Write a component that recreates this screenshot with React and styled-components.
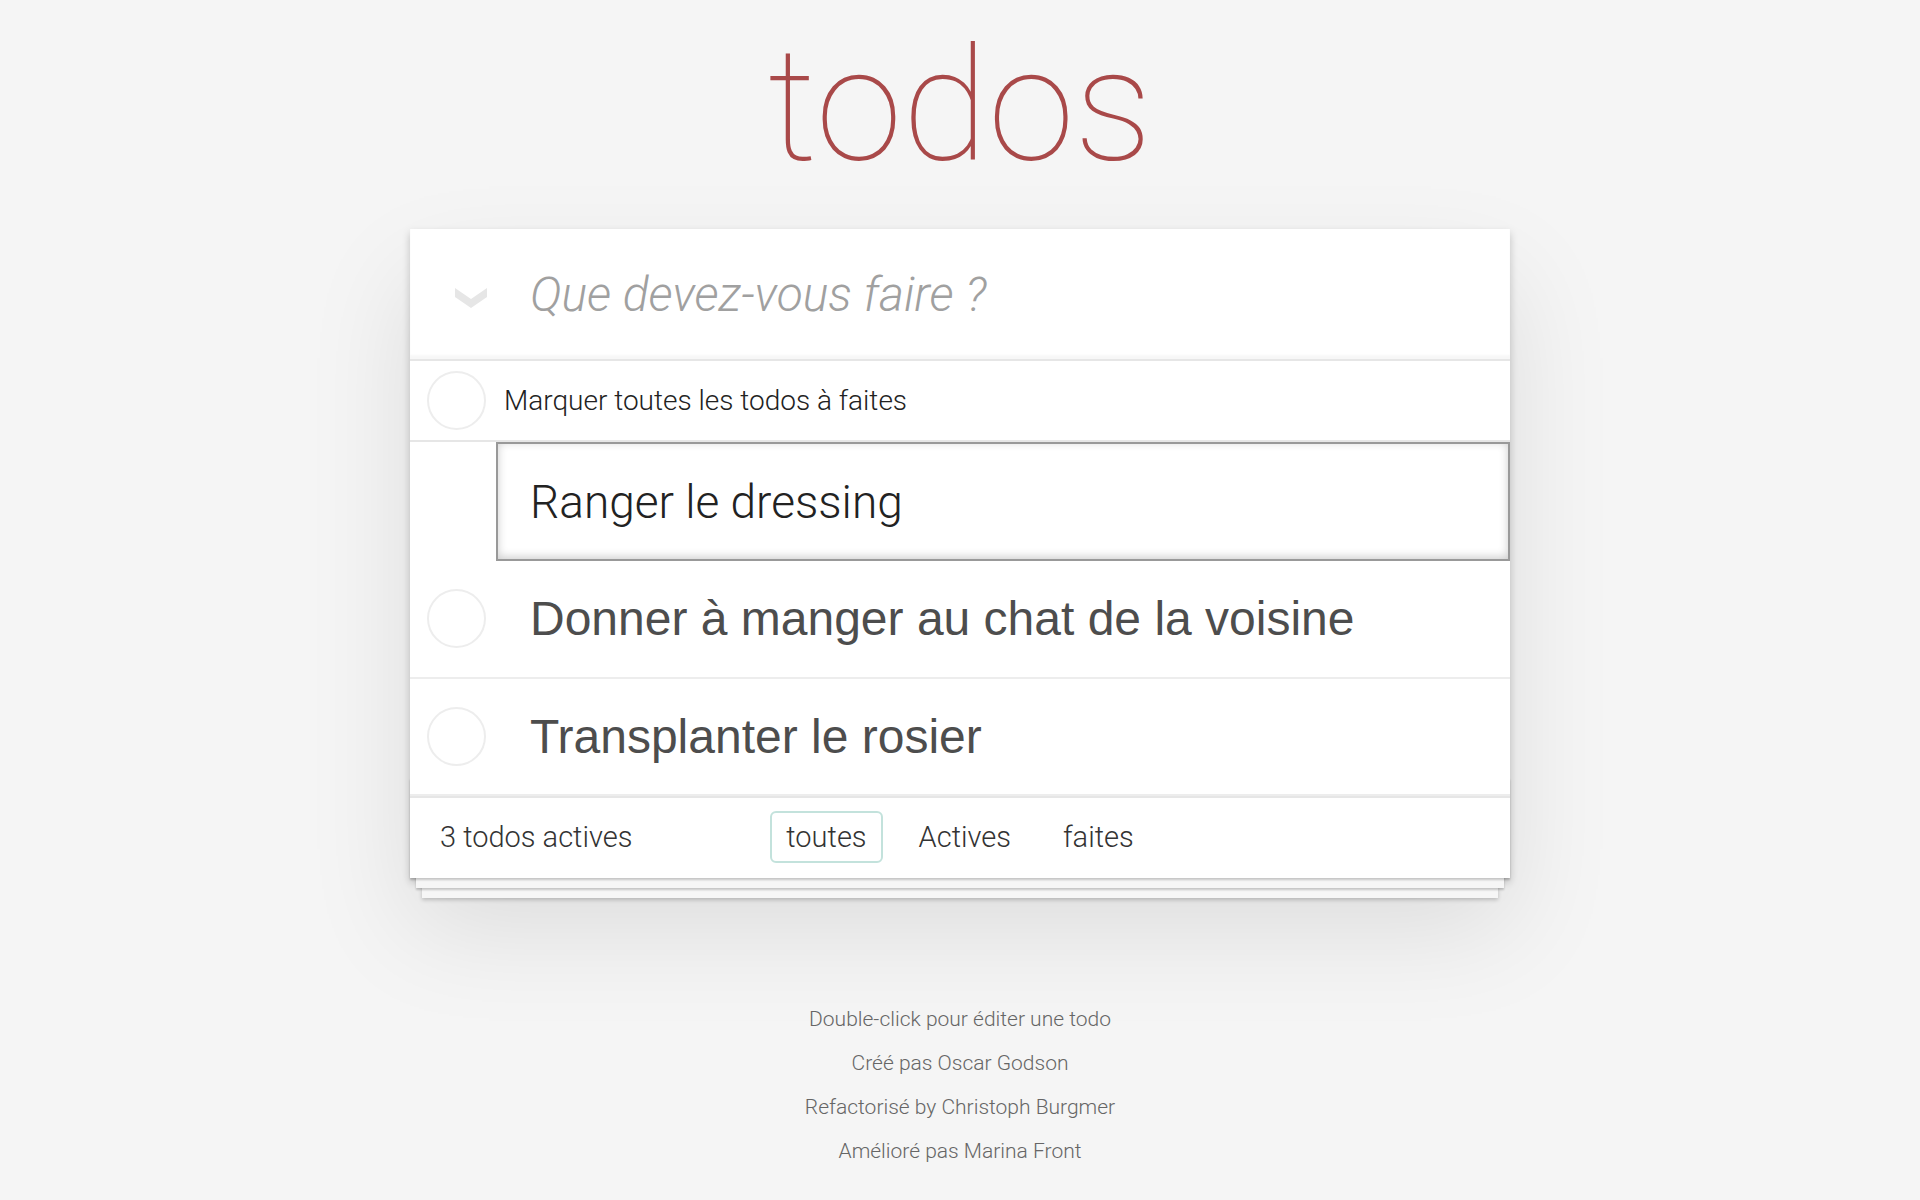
import React, { useEffect, useRef } from "react";
import styled, { createGlobalStyle } from "styled-components";

const LIGHT = `"Roboto", "Helvetica Neue", Helvetica, Arial, sans-serif`;
const REGULAR = `"Liberation Sans", "Helvetica Neue", Helvetica, Arial, sans-serif`;

const GlobalStyle = createGlobalStyle`
  * { box-sizing: border-box; }
  html, body {
    margin: 0;
    padding: 0;
    background: #f5f5f5;
  }
  body {
    font-family: ${LIGHT};
    font-weight: 300;
    color: #111;
    -webkit-font-smoothing: antialiased;
  }
`;

// Todo list page (edit mode on first item)
export default function App() {
  const editRef = useRef(null);

  useEffect(() => {
    const el = editRef.current;
    if (el) {
      el.focus();
      const len = el.value.length;
      el.setSelectionRange(len, len);
    }
  }, []);

  return (
    <>
      <GlobalStyle />
      <Page>
        <Title>todos</Title>

        <Card>
          {/* New todo */}
          <Header>
            <ToggleAllCell>
              <Chevron viewBox="0 0 32 20" width="32" height="20">
                <polygon points="0,0 16,11 32,0 32,9 16,20 0,9" fill="#e6e6e6" />
              </Chevron>
            </ToggleAllCell>
            <NewTodo placeholder="Que devez-vous faire ?" />
          </Header>

          <Main>
            <MarkAllRow>
              <Circle />
              <MarkAllLabel>Marquer toutes les todos à faites</MarkAllLabel>
            </MarkAllRow>

            <TodoList>
              <EditItem>
                <EditInput ref={editRef} defaultValue="Ranger le dressing" />
              </EditItem>
              <TodoItem>
                <Circle />
                <TodoLabel>Donner à manger au chat de la voisine</TodoLabel>
              </TodoItem>
              <TodoItem>
                <Circle />
                <TodoLabel>Transplanter le rosier</TodoLabel>
              </TodoItem>
            </TodoList>
          </Main>

          <Footer>
            <Count>3 todos actives</Count>
            <Filters>
              <FilterLink href="#/" selected>toutes</FilterLink>
              <FilterLink href="#/active">Actives</FilterLink>
              <FilterLink href="#/completed">faites</FilterLink>
            </Filters>
            <span />
          </Footer>
        </Card>

        <Info>
          <p>Double-click pour éditer une todo</p>
          <p>Créé pas Oscar Godson</p>
          <p>Refactorisé by Christoph Burgmer</p>
          <p>Amélioré pas Marina Front</p>
        </Info>
      </Page>
    </>
  );
}

const Page = styled.div`
  width: 1100px;
  margin: 0 auto;
  padding-top: 25px;
`;

const Title = styled.h1`
  margin: 0 0 44px;
  font-family: "Roboto", sans-serif;
  font-size: 157px;
  font-weight: 100;
  line-height: 160px;
  text-align: center;
  color: #a94949;
`;

const Card = styled.section`
  background: #fff;
  box-shadow: 0 4px 8px 0 rgba(0, 0, 0, 0.2), 0 50px 100px 0 rgba(0, 0, 0, 0.1);
`;

const Header = styled.header`
  display: flex;
  align-items: center;
  height: 130px;
  box-shadow: inset 0 -4px 2px rgba(0, 0, 0, 0.03);
`;

const ToggleAllCell = styled.label`
  width: 120px;
  display: flex;
  justify-content: center;
  align-items: center;
  padding: 8px 0 0 2px;
`;

const Chevron = styled.svg`
  display: block;
`;

const NewTodo = styled.input`
  flex: 1;
  height: 100%;
  border: none;
  outline: none;
  background: transparent;
  padding: 0 32px 0 0;
  font-family: ${LIGHT};
  font-size: 48px;
  font-weight: 300;
  color: #111;
  &::placeholder {
    font-style: italic;
    font-weight: 300;
    color: #a0a0a0;
  }
`;

const Main = styled.section`
  border-top: 2px solid #e6e6e6;
`;

const Circle = styled.span`
  flex: none;
  width: 59px;
  height: 59px;
  margin-left: 17px;
  border: 2px solid #ededed;
  border-radius: 50%;
`;

const MarkAllRow = styled.div`
  display: flex;
  align-items: center;
  height: 81px;
  border-bottom: 2px solid #e6e6e6;
`;

const MarkAllLabel = styled.span`
  margin-left: 18px;
  font-size: 28px;
  font-weight: 300;
  color: #222;
`;

const TodoList = styled.ul`
  margin: 0;
  padding: 0;
  list-style: none;
`;

const EditItem = styled.li`
  display: block;
`;

const EditInput = styled.input`
  display: block;
  width: calc(100% - 86px);
  margin: 0 0 0 86px;
  padding: 25px 32px 23px;
  border: 2px solid #999;
  outline: none;
  box-shadow: inset 0 -2px 10px 0 rgba(0, 0, 0, 0.2);
  font-family: ${LIGHT};
  font-size: 46px;
  font-weight: 300;
  line-height: 67px;
  color: #222;
  caret-color: #111;
  background: #fff;
`;

const TodoItem = styled.li`
  display: flex;
  align-items: center;
  border-bottom: 2px solid #ededed;
`;

const TodoLabel = styled.label`
  display: block;
  padding: 29px 30px 29px 44px;
  font-family: ${REGULAR};
  font-size: 48px;
  font-weight: 400;
  line-height: 1.2;
  color: #4d4d4d;
`;

const Footer = styled.footer`
  position: relative;
  display: grid;
  grid-template-columns: 1fr auto 1fr;
  align-items: center;
  height: 82px;
  padding: 0 30px;
  border-top: 2px solid #e6e6e6;
  font-size: 29px;
  font-weight: 300;
  color: #333;

  &::before {
    content: "";
    position: absolute;
    left: 0;
    right: 0;
    bottom: 0;
    height: 100px;
    pointer-events: none;
    box-shadow: 0 2px 2px rgba(0, 0, 0, 0.2),
      0 16px 0 -6px #f6f6f6,
      0 18px 2px -6px rgba(0, 0, 0, 0.2),
      0 32px 0 -12px #f6f6f6,
      0 34px 4px -12px rgba(0, 0, 0, 0.2);
  }
`;

const Count = styled.span`
  text-align: left;
  padding-bottom: 2px;
`;

const Filters = styled.nav`
  display: flex;
  align-items: center;
  gap: 8px;
  padding-bottom: 2px;
`;

const FilterLink = styled.a`
  display: inline-block;
  margin: 0 6px;
  padding: 6px 14px;
  line-height: 36px;
  color: inherit;
  text-decoration: none;
  border: 2px solid ${(p) => (p.selected ? "#c3e2dc" : "transparent")};
  border-radius: 6px;
`;

const Info = styled.footer`
  margin: 130px auto 0;
  padding-bottom: 20px;
  font-size: 21px;
  font-weight: 300;
  color: #666;
  text-align: center;

  p {
    margin: 22px 0;
    line-height: 22px;
  }
`;
